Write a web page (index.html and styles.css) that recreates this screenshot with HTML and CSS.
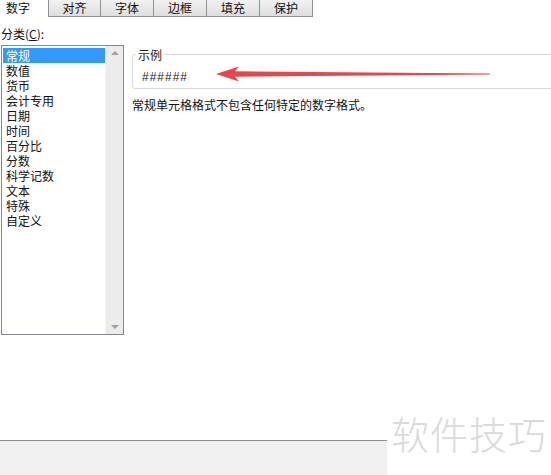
FILE: index.html
```html
<!DOCTYPE html>
<html lang="zh-CN">
<head>
<meta charset="utf-8">
<link rel="stylesheet" href="styles.css">
</head>
<body>
<div class="page">
  <div class="tabs">
    <div class="tab active">数字</div>
    <div class="tab">对齐</div>
    <div class="tab">字体</div>
    <div class="tab">边框</div>
    <div class="tab">填充</div>
    <div class="tab">保护</div>
  </div>
  <div class="main">
    <div class="left">
      <div class="label">分类(<u>C</u>):</div>
      <div class="listbox">
        <ul class="items">
          <li class="sel">常规</li>
          <li>数值</li>
          <li>货币</li>
          <li>会计专用</li>
          <li>日期</li>
          <li>时间</li>
          <li>百分比</li>
          <li>分数</li>
          <li>科学记数</li>
          <li>文本</li>
          <li>特殊</li>
          <li>自定义</li>
        </ul>
        <div class="scrollbar">
          <span class="arr up"></span>
          <span class="arr down"></span>
        </div>
      </div>
    </div>
    <div class="right">
      <fieldset class="sample">
        <legend>示例</legend>
        <div class="hash">######</div>
      </fieldset>
      <div class="desc">常规单元格格式不包含任何特定的数字格式。</div>
    </div>
  </div>
  <div class="footer"></div>
  <svg class="arrow" width="278" height="18" viewBox="0 0 278 18">
    <path d="M0,9 L23,1.5 L19,6.2 L274,8.6 L274,9.4 L19,11.8 L23,16.5 Z" fill="#e5474c"/>
  </svg>
  <div class="watermark">软件技巧</div>
</div>
</body>
</html>
```
FILE: styles.css
```css
html, body {
  margin: 0;
  padding: 0;
  background: #fff;
  overflow: hidden;
}
.page {
  position: relative;
  width: 551px;
  height: 475px;
  display: flex;
  flex-direction: column;
  font-family: "Noto Sans CJK SC", "Liberation Sans", sans-serif;
  font-size: 12px;
  color: #111;
}
.tabs {
  display: flex;
  height: 17px;
}
.tab {
  box-sizing: border-box;
  width: 53px;
  height: 17px;
  line-height: 15px;
  text-align: center;
  border: 1px solid #8f9196;
  border-top: none;
  border-left: none;
  background: linear-gradient(#f2f2f2, #dedede);
}
.tab.active {
  width: 48px;
  background: #fff;
  border: none;
  text-align: left;
  padding-left: 6px;
}
.tabs .tab:nth-child(2) {
  border-left: 1px solid #8f9196;
}
.main {
  flex: 1;
  display: flex;
  gap: 8px;
  padding-left: 1px;
}
.left {
  width: 123px;
  display: flex;
  flex-direction: column;
}
.label {
  margin-top: 9px;
  line-height: 15px;
  height: 15px;
  margin-bottom: 4px;
}
.label u {
  text-decoration-thickness: 1px;
}
.listbox {
  box-sizing: border-box;
  height: 290px;
  border: 1px solid #828790;
  display: flex;
}
.items {
  list-style: none;
  margin: 0;
  padding: 2px 0 0 1px;
  flex: 1;
}
.items li {
  line-height: 15px;
  height: 15px;
  padding-left: 3px;
}
.items li.sel {
  background: #3399ff;
  color: #fff;
}
.scrollbar {
  width: 17px;
  background: #ececec;
  border-left: 1px solid #f6f6f6;
  display: flex;
  flex-direction: column;
  justify-content: space-between;
  align-items: center;
  padding: 5px 0 5px;
}
.arr {
  width: 0;
  height: 0;
  border-left: 4px solid transparent;
  border-right: 4px solid transparent;
}
.arr.up {
  border-bottom: 4px solid #a0a0a0;
}
.arr.down {
  border-top: 4px solid #a0a0a0;
}
.right {
  flex: 1;
  min-width: 0;
}
.sample {
  margin: 30px -20px 0 0;
  padding: 0 0 4px 9px;
  border: 1px solid #d5dade;
  border-radius: 3px;
}
.sample legend {
  padding: 0 2px;
  margin-left: -6px;
  line-height: 15px;
  color: #222;
}
.hash {
  margin-top: 8px;
  line-height: 14px;
  font-family: "Liberation Sans", sans-serif;
  font-size: 12px;
  letter-spacing: 1px;
  color: #222;
}
.desc {
  margin-top: 9px;
  line-height: 14px;
}
.footer {
  height: 34px;
  width: 387px;
  border-top: 1px solid #8c8c8c;
  background: #f0f0f0;
}
.arrow {
  position: absolute;
  left: 216px;
  top: 65px;
}
.watermark {
  position: absolute;
  left: 391px;
  top: 408px;
  font-size: 38px;
  line-height: 50px;
  color: #d9d9d9;
  letter-spacing: 1px;
  font-weight: 300;
}
```
